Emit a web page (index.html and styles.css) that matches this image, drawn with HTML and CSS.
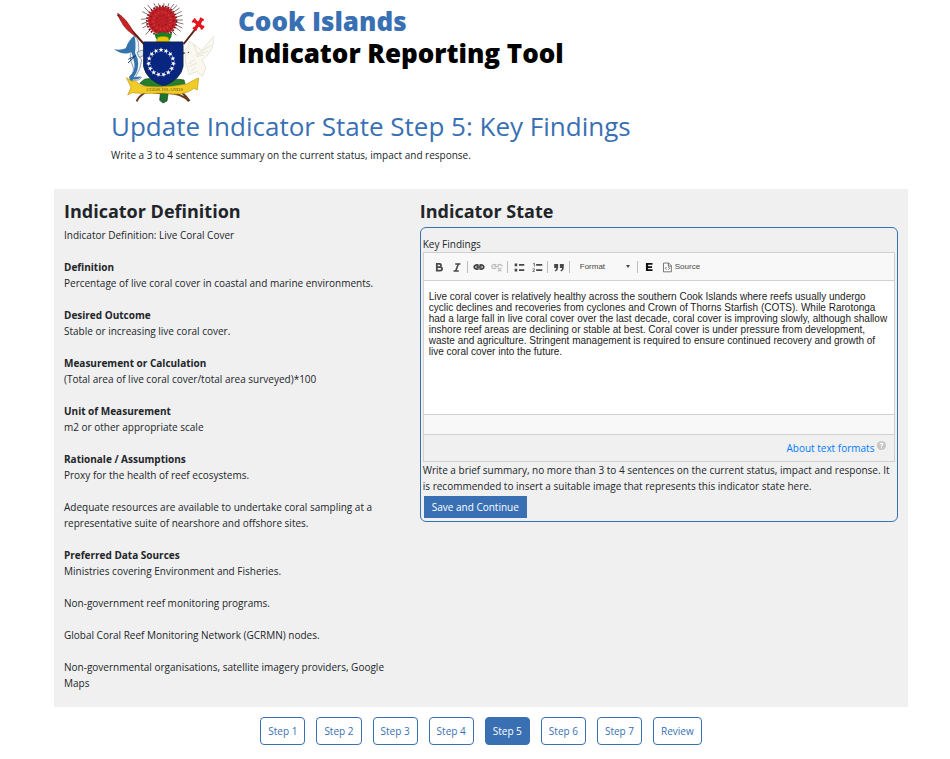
FILE: index.html
```html
<!DOCTYPE html>
<html lang="en">
<head>
<meta charset="utf-8">
<meta name="viewport" content="width=device-width, initial-scale=1">
<title>Cook Islands Indicator Reporting Tool</title>
<link rel="stylesheet" href="styles.css">
</head>
<body>
<header class="site-header">
  <svg class="crest" viewBox="24 9 303 303" role="img" aria-label="Cook Islands coat of arms">
    <defs>
      <path id="star" d="M0-8 2-3H8L3 1 5 7 0 3-5 7-3 1-8-3H-2Z" fill="#fff"/>
    </defs>
    <path d="M38 44 122 138M288 66 236 132" stroke="#5b2118" stroke-width="6"/>
    <path d="M38 40Q64 55 86 98L94 111 82 102Q52 83 38 40Z" fill="#c92222" stroke="#7a1512" stroke-width="2"/>
    <path d="M266 60 294 84M291 56 269 88" fill="none" stroke="#e3161b" stroke-width="10"/>
    <path d="m262 67 9-11M288 88l9-10M285 54l11 7M264 83l11 8" fill="none" stroke="#e3161b" stroke-width="6"/>
    <path d="M130 44 112 35M128 56 108 58M130 74 113 84M138 86 122 104M142 32 128 15M154 26 147 10M176 24 177 9M194 28 207 12M205 37 224 24M212 52 232 46M213 66 235 72M209 80 227 94M200 92 214 106M126 66 110 72M134 38 118 22M165 24 160 10M187 24 192 10M200 32 216 16M210 44 230 34M214 60 234 60M212 74 232 84" fill="none" stroke="#4c2a26" stroke-width="2"/>
    <circle cx="170" cy="63" r="44" fill="none" stroke="#7d1119" stroke-width="6" stroke-dasharray="5 4"/>
    <circle cx="171" cy="62" r="42" fill="#bd2027"/>
    <circle cx="171" cy="62" r="35" fill="none" stroke="#8d141c" stroke-width="5" stroke-dasharray="3 9"/>
    <circle cx="171" cy="62" r="26" fill="none" stroke="#df3f3f" stroke-width="5" stroke-dasharray="3 8"/>
    <circle cx="171" cy="62" r="16" fill="none" stroke="#94151b" stroke-width="5" stroke-dasharray="3 8"/>
    <path d="M156 101Q172 92 190 101L201 98Q200 126 174 125 150 126 149 99Z" fill="#108127"/>
    <path d="M158 112Q174 106 190 112L194 127H154Z" fill="#e9c900" stroke="#746500"/>
    <path d="M118 238Q147 229 169 257L177 262Q199 230 237 240L241 255 194 267H139L104 250Z" fill="#267d2b" stroke="#174e20" stroke-width="2"/>
    <path d="M95 304Q103 284 135 272L211 263Q236 279 254 303M252 304Q229 278 181 279 133 283 92 258" fill="none" stroke="#673c1e" stroke-width="6"/>
    <path d="m166 282 11-8 12 9-3 20-12 6-10-8Z" fill="#1d7430" stroke="#163d1c" stroke-width="2"/>
    <path d="M79 156Q72 116 88 108 107 120 99 162L110 180Q108 206 91 232L109 231Q105 244 85 240L78 251Q72 237 76 231 91 212 82 195 71 170 79 156Z" fill="#f3f7fa" stroke="#54718d" stroke-width="2"/>
    <path d="M79 156Q56 168 27 148 48 152 62 145 71 119 88 108 94 126 90 158L98 176Q104 208 86 232L106 230Q103 240 84 238L79 251 72 230Q92 215 88 190 84 168 79 156Z" fill="#3474ad"/>
    <path d="M96 158Q110 146 118 152L114 168 102 172Z" fill="#dce6ee" stroke="#54718d" stroke-width="2"/>
    <path d="m70 178 22-11-23 22" fill="none" stroke="#123b69" stroke-width="3"/>
    <path d="M245 146 254 123 290 151 328 107Q327 156 291 179L303 203 292 229 276 215 252 224 247 203Q237 181 241 164L229 158Z" fill="#faf8ef" stroke="#dedace" stroke-width="2"/>
    <path d="m265 132 12 28m-2 3 43-27m-44 30 35-13m-35 17 20-5m-42 26 18-12m-17 21 23-11m-18 23 15-10" fill="none" stroke="#dedace" stroke-width="2"/>
    <path d="m226 155 16 3-6 5Z" fill="#473d32"/>
    <circle cx="250" cy="157" r="2" fill="#222"/>
    <path d="M116 126H234V199Q227 239 175 258 124 238 116 200Z" fill="#08267f" stroke="#172546" stroke-width="3"/>
    <g transform="translate(168 187)">
      <use href="#star" transform="rotate(0) translate(0 -37)"/><use href="#star" transform="rotate(24) translate(0 -37)"/>
      <use href="#star" transform="rotate(48) translate(0 -37)"/><use href="#star" transform="rotate(72) translate(0 -37)"/>
      <use href="#star" transform="rotate(96) translate(0 -37)"/><use href="#star" transform="rotate(120) translate(0 -37)"/>
      <use href="#star" transform="rotate(144) translate(0 -37)"/><use href="#star" transform="rotate(168) translate(0 -37)"/>
      <use href="#star" transform="rotate(192) translate(0 -37)"/><use href="#star" transform="rotate(216) translate(0 -37)"/>
      <use href="#star" transform="rotate(240) translate(0 -37)"/><use href="#star" transform="rotate(264) translate(0 -37)"/>
      <use href="#star" transform="rotate(288) translate(0 -37)"/><use href="#star" transform="rotate(312) translate(0 -37)"/>
      <use href="#star" transform="rotate(336) translate(0 -37)"/>
    </g>
    <path d="m64 233 17 11 10-2 17 15Q174 267 245 252L271 238 281 234 277 270 267 265Q239 290 176 279 115 282 82 278L68 285 78 262Z" fill="#f1cb26" stroke="#c19c17" stroke-width="2"/>
    <text class="crest-motto" x="179" y="274" text-anchor="middle">COOK ISLANDS</text>
  </svg>
  <div class="brand"><span class="brand-place">Cook Islands</span><span>Indicator Reporting Tool</span></div>
</header>

<div class="intro">
  <h1>Update Indicator State Step 5: Key Findings</h1>
  <p>Write a 3 to 4 sentence summary on the current status, impact and response.</p>
</div>

<main class="panel">
  <section class="definition">
    <h2>Indicator Definition</h2>
    <p>Indicator Definition: Live Coral Cover</p>
    <div class="entry"><h3>Definition</h3><p>Percentage of live coral cover in coastal and marine environments.</p></div>
    <div class="entry"><h3>Desired Outcome</h3><p>Stable or increasing live coral cover.</p></div>
    <div class="entry"><h3>Measurement or Calculation</h3><p>(Total area of live coral cover/total area surveyed)*100</p></div>
    <div class="entry"><h3>Unit of Measurement</h3><p>m2 or other appropriate scale</p></div>
    <div class="entry"><h3>Rationale / Assumptions</h3><p>Proxy for the health of reef ecosystems.</p></div>
    <p class="entry">Adequate resources are available to undertake coral sampling at a representative suite of nearshore and offshore sites.</p>
    <div class="entry"><h3>Preferred Data Sources</h3><p>Ministries covering Environment and Fisheries.</p></div>
    <p class="entry">Non-government reef monitoring programs.</p>
    <p class="entry">Global Coral Reef Monitoring Network (GCRMN) nodes.</p>
    <p class="entry">Non-governmental organisations, satellite imagery providers, Google Maps</p>
  </section>

  <section class="state">
    <h2>Indicator State</h2>
    <form class="state-form">
      <label for="findings">Key Findings</label>
      <div class="editor">
        <div class="toolbar">
          <button type="button" class="tool" aria-label="Bold"><svg viewBox="0 0 16 16"><path d="M5.500 4.500H9a1.800 1.800 0 0 1 0 3.500H5.500ZM5.500 8H9.500a1.900 1.900 0 0 1 0 4H5.500Z" fill="none" stroke="#484848" stroke-width="2"/></svg></button>
          <button type="button" class="tool" aria-label="Italic"><svg viewBox="0 0 16 16"><path d="M6 4.500h6M4 12.500h6M9.500 4.500l-3 8" fill="none" stroke="#484848" stroke-width="1.800"/></svg></button>
          <span class="divider"></span>
          <button type="button" class="tool" aria-label="Link"><svg viewBox="0 0 16 16"><path d="M7.500 6.500C6 5 2.500 5.500 2.500 8s3.500 3 5 1.500M8.500 6.500C10 5 13.500 5.500 13.500 8s-3.500 3-5 1.500" fill="none" stroke="#404040" stroke-width="2"/><path d="M5 8h6" stroke="#404040" stroke-width="2"/></svg></button>
          <button type="button" class="tool" aria-label="Unlink" disabled><svg viewBox="0 0 16 16"><path d="M7 6C5.500 4.500 2 5 2 7.500s3.500 3 5 1.500M9 6c1.500-1.500 5-1 5 1.500M5 7.500h5M9 9l4 4M13 9l-4 4" fill="none" stroke="#bdbdbd" stroke-width="1.600"/></svg></button>
          <span class="divider"></span>
          <button type="button" class="tool" aria-label="Bulleted list"><svg viewBox="0 0 16 16"><path d="M3 4h3v3H3ZM3 10h3v3H3ZM8 4.500h6v2H8ZM8 10.500h6v2H8Z" fill="#484848"/></svg></button>
          <button type="button" class="tool" aria-label="Numbered list"><svg viewBox="0 0 16 16"><path d="M7 4.500h7v2H7ZM7 10.500h7v2H7Z" fill="#484848"/><path d="M3.500 4.500 5 3.500V7.500M3 10h2v1.500L3 13h2.500" fill="none" stroke="#666"/></svg></button>
          <span class="divider"></span>
          <button type="button" class="tool" aria-label="Block quote"><svg viewBox="0 0 16 16"><path d="M2.500 4.500h4.500v4Q7 12 4 13L3 12Q5 11 5 9H2.500ZM9 4.500h4.500v4Q13.500 12 10.500 13L9.500 12Q11.500 11 11.500 9H9Z" fill="#484848"/></svg></button>
          <span class="divider"></span>
          <button type="button" class="format"><span>Format</span><svg viewBox="0 0 6 4"><path d="M1 0h4L3 3Z" fill="#484848"/></svg></button>
          <span class="divider"></span>
          <button type="button" class="tool" aria-label="Embed"><svg viewBox="0 0 16 16"><path d="M4.500 3.500h7.500v2H7V7H11.500v2H7v1.500H12v2H4.500Z" fill="#111"/></svg></button>
          <button type="button" class="source"><svg viewBox="0 0 16 16"><path d="M4 3.500h6l3 3v7H4Z" fill="#fff" stroke="#666"/><path d="M9.500 3.500v3.500H13M7.500 8 6 9.500 7.500 11M9.500 8 11 9.500 9.500 11" fill="none" stroke="#555"/></svg>Source</button>
        </div>
        <textarea id="findings" spellcheck="false">Live coral cover is relatively healthy across the southern Cook Islands where reefs usually undergo cyclic declines and recoveries from cyclones and Crown of Thorns Starfish (COTS). While Rarotonga had a large fall in live coral cover over the last decade, coral cover is improving slowly, although shallow inshore reef areas are declining or stable at best. Coral cover is under pressure from development, waste and agriculture. Stringent management is required to ensure continued recovery and growth of live coral cover into the future.</textarea>
        <div class="status-bar"></div>
        <div class="formats"><a href="#formats">About text formats <svg viewBox="0 0 10 10" aria-hidden="true"><circle cx="5" cy="5" r="5" fill="#c4c4c4"/><path d="M3.500 3.800Q3.500 2.300 5 2.300T6.500 3.700Q6.500 4.500 5 5.200V6.200M5 7v1.300" fill="none" stroke="#fff" stroke-width="1.300"/></svg></a></div>
      </div>
      <p>Write a brief summary, no more than 3 to 4 sentences on the current status, impact and response. It is recommended to insert a suitable image that represents this indicator state here.</p>
      <button type="submit" class="save">Save and Continue</button>
    </form>
  </section>
</main>

<nav class="steps" aria-label="Steps">
  <a href="#step-1">Step 1</a>
  <a href="#step-2">Step 2</a>
  <a href="#step-3">Step 3</a>
  <a href="#step-4">Step 4</a>
  <a href="#step-5" class="current" aria-current="step">Step 5</a>
  <a href="#step-6">Step 6</a>
  <a href="#step-7">Step 7</a>
  <a href="#review">Review</a>
</nav>
</body>
</html>
```
FILE: styles.css
```css
* { box-sizing: border-box; }
body {
  margin: 0;
  background: #fff;
  color: #212529;
  font-family: "Open Sans", "Noto Sans", sans-serif;
  font-size: 10px;
  line-height: 16px;
}
h1, h2, h3, p { margin: 0; }
button { font: inherit; }
.site-header {
  display: flex;
  align-items: flex-start;
  gap: 24px;
  padding: 3px 42px 0 113px;
}
.crest { width: 101px; height: 101px; flex: none; }
.crest-motto { font-family: "Liberation Serif", serif; font-size: 15px; fill: #6b5a08; }
.brand {
  display: flex;
  flex-direction: column;
  padding-top: 2px;
  color: #000;
  font-size: 26px;
  font-weight: 800;
  line-height: 32px;
}
.brand-place { color: #3970b3; }
.intro { padding: 5px 42px 0 111px; }
h1 {
  color: #3970b3;
  font-size: 26px;
  font-weight: 400;
  line-height: 34px;
  margin-bottom: 4px;
}
.panel {
  display: grid;
  grid-template-columns: 7fr 10fr;
  gap: 21px;
  margin: 26px 42px 0 54px;
  padding: 10px 10px 16px;
  background: #f0f0f0;
}
h2 { font-size: 18px; font-weight: 700; line-height: 24px; margin-bottom: 4px; }
.definition h2 + p { margin-bottom: 16px; }
h3 { font-size: inherit; font-weight: 700; line-height: 16px; }
.entry + .entry { margin-top: 16px; }
.state-form {
  border: 1px solid #3970b3;
  border-radius: 6px;
  padding: 8px 2px 3px;
}
.state-form label { display: block; }
.editor { border: 1px solid #d1d1d1; }
.toolbar {
  display: flex;
  align-items: center;
  height: 28px;
  padding: 0 6px;
  background: #f8f8f8;
  border-bottom: 1px solid #d1d1d1;
}
.tool, .format, .source { border: 0; padding: 0; background: none; color: #484848; }
.tool { width: 18px; height: 16px; display: flex; justify-content: center; align-items: center; }
.tool svg, .source svg { width: 14px; height: 14px; display: block; }
.divider { width: 1px; height: 12px; margin: 0 2px 0 1px; background: #bcbcbc; }
.format, .source {
  display: flex;
  align-items: center;
  font-family: "Liberation Sans", Arial, sans-serif;
  font-size: 8px;
}
.format { justify-content: space-between; width: 64px; padding: 0 5px 0 8px; }
.format svg { width: 6px; height: 4px; }
.source { gap: 1px; padding-left: 2px; }
textarea {
  display: block;
  width: 100%;
  height: 133px;
  padding: 10px 5px;
  border: 0;
  resize: none;
  outline: none;
  background: #fff;
  color: #222;
  font-family: "Liberation Sans", Arial, sans-serif;
  font-size: 10px;
  line-height: 11px;
}
.status-bar {
  height: 20px;
  background: #f8f8f8;
  border-top: 1px solid #d1d1d1;
}
.formats {
  border-top: 1px solid #d1d1d1;
  padding: 5px 8px;
  text-align: right;
}
.formats a { color: #007bff; text-decoration: none; }
.formats svg { width: 9px; height: 9px; vertical-align: 2px; }
.save {
  display: block;
  margin: 2px 1px 0;
  padding: 3px 8px;
  border: 0;
  background: #3970b3;
  color: #fff;
}
.steps {
  display: flex;
  justify-content: center;
  gap: 11px;
  padding: 10px 42px 14px 54px;
}
.steps a {
  border: 1px solid #3970b3;
  border-radius: 4px;
  padding: 5px 7px;
  color: #3970b3;
  text-decoration: none;
}
.steps .current { background: #3970b3; color: #fff; }
```
